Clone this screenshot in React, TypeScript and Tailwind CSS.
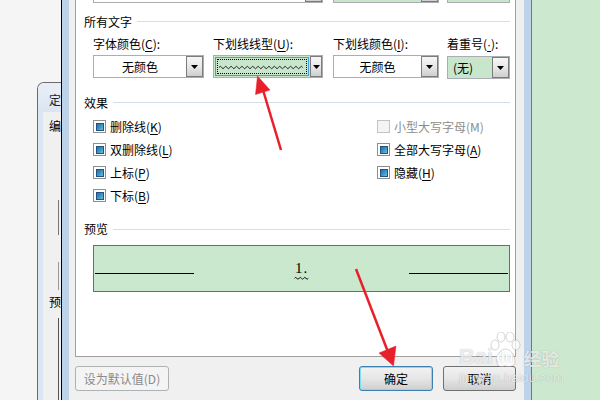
import React from "react";

function wavePath(x0: number, x1: number, y: number, half: number, amp: number) {
  let d = `M${x0} ${y} Q${x0 + half / 2} ${y - amp * 2} ${x0 + half} ${y}`;
  for (let x = x0 + 2 * half; x <= x1; x += half) d += ` T${x} ${y}`;
  return d;
}

const Tri = () => (
  <svg width="7" height="4" viewBox="0 0 7 4">
    <polygon points="0,0 7,0 3.5,4" fill="#000" />
  </svg>
);

const DropBtn = () => (
  <div className="w-[17px] h-full border border-[#7c7c7c] bg-gradient-to-b from-[#f6f6f6] via-[#e8e8e8] to-[#cfcfcf] flex items-center justify-center">
    <Tri />
  </div>
);

const K = ({ c }: { c: string }) => <span className="underline underline-offset-[2px]">{c}</span>;

const Section = ({ title, lineTop }: { title: string; lineTop: string }) => (
  <div className="flex items-start leading-[16px]">
    <span>{title}</span>
    <div className={`flex-1 h-px bg-[#d5dfe5] ml-[5px] ${lineTop}`} />
  </div>
);

const Box = ({ disabled }: { disabled?: boolean }) =>
  disabled ? (
    <span className="w-[13px] h-[13px] border border-[#c3c3c3] bg-[#f4f4f4] shrink-0" />
  ) : (
    <span className="w-[13px] h-[13px] border border-[#8e8f8f] bg-white flex items-center justify-center shrink-0">
      <span className="w-[8px] h-[8px] border border-[#23527f] bg-gradient-to-br from-[#2a6fa6] via-[#3b94c4] to-[#62c4e2]" />
    </span>
  );

const CB = ({ children, disabled }: { children: React.ReactNode; disabled?: boolean }) => (
  <div className="h-[23px] flex items-center gap-[4px] leading-[16px]">
    <Box disabled={disabled} />
    <span className={disabled ? "text-[#8d8d8d]" : ""}>{children}</span>
  </div>
);

export default function App() {
  return (
    <div className="relative w-[600px] h-[400px] overflow-hidden flex bg-[#f5f5f5] font-['Noto_Sans_CJK_SC','Noto_Sans',sans-serif] text-[12px] text-black">
      {/* back dialog on the left */}
      <div className="w-[61px] h-full flex flex-col pt-[82px] pl-[37px] bg-[#f5f5f5] shrink-0">
        <div className="flex-1 flex flex-col rounded-tl-[7px] border-l border-t border-[#6b6b6b] overflow-hidden">
          <div className="h-[29px] bg-gradient-to-b from-[#e9eff7] to-[#dbe5f1] pl-[11px] pt-[10px] leading-[14px] text-[#222]">定</div>
          <div className="flex-1 flex">
            <div className="w-[7px] bg-[#dbe6f3]" />
            <div className="flex-1 bg-[#f0f0f0] pl-[6px] flex flex-col">
              <div className="mt-[6px] leading-[16px]">编</div>
              <div className="mt-[66px] ml-[9px] h-[35px] border-l border-[#777]" />
              <div className="mt-[27px] ml-[9px] h-[28px] border-l border-[#999]" />
              <div className="mt-[4px] leading-[16px]">预</div>
              <div className="mt-[8px] ml-[9px] flex-1 border-l border-[#555]" />
            </div>
          </div>
        </div>
      </div>

      {/* main dialog */}
      <div className="h-full flex border-l border-black shrink-0">
        <div className="w-[7px] bg-[#bcd3ea]" />
        <div className="w-[455px] bg-[#f0f0f0] pl-[6px] pr-[8px] flex flex-col">
          <div className="h-[357px] w-[441px] bg-white border-x border-b border-[#a0a0a0] pl-[8px] pr-[5px] flex flex-col">
            {/* partial top row */}
            <div className="-mt-[20px] h-[23px] flex ml-[9px] shrink-0">
              <div className="w-[230px] h-full border border-[#abadb3] flex justify-end">
                <DropBtn />
              </div>
              <div className="w-[106px] h-full ml-[10px] border border-[#abadb3] flex">
                <div className="flex-1 bg-[#c7e6cb]" />
                <DropBtn />
              </div>
              <div className="w-[63px] h-full ml-[8px] border border-[#abadb3] bg-[#c7e6cb]" />
            </div>

            <div className="mt-[11px]">
              <Section title="所有文字" lineTop="mt-[7px]" />
            </div>

            <div className="mt-[6px] ml-[9px] flex">
              <div className="w-[120px] flex flex-col">
                <div className="leading-[16px] mb-[3px]">字体颜色(<K c="C" />):</div>
                <div className="w-[111px] h-[23px] border border-[#abadb3] flex">
                  <div className="flex-1 flex items-center justify-center">无颜色</div>
                  <DropBtn />
                </div>
              </div>
              <div className="w-[120px] flex flex-col">
                <div className="leading-[16px] mb-[3px]">下划线线型(<K c="U" />):</div>
                <div className="w-[110px] h-[23px] border border-[#abadb3] flex">
                  <div className="flex-1 bg-[#c7e6cb] p-px">
                    <div className="w-full h-full border border-[#3f9fe0] p-px">
                      <div className="w-full h-full border border-dotted border-black flex items-center">
                        <svg width="88" height="6" viewBox="0 0 88 6">
                          <path d={wavePath(1, 87, 3.5, 2.7, 1.2)} stroke="#222" strokeWidth="1" fill="none" />
                        </svg>
                      </div>
                    </div>
                  </div>
                  <DropBtn />
                </div>
              </div>
              <div className="w-[114px] flex flex-col">
                <div className="leading-[16px] mb-[3px]">下划线颜色(<K c="I" />):</div>
                <div className="w-[106px] h-[23px] border border-[#abadb3] flex">
                  <div className="flex-1 flex items-center justify-center">无颜色</div>
                  <DropBtn />
                </div>
              </div>
              <div className="w-[63px] flex flex-col">
                <div className="leading-[16px] mb-[3px]">
                  着重号(<span className="underline underline-offset-[2px] font-['Liberation_Sans',sans-serif]">·</span>):
                </div>
                <div className="w-[63px] h-[23px] border border-[#abadb3] flex bg-[#c7e6cb]">
                  <div className="flex-1 flex items-center pl-[5px]">(无)</div>
                  <DropBtn />
                </div>
              </div>
            </div>

            <div className="mt-[16px]">
              <Section title="效果" lineTop="mt-[7px]" />
            </div>

            <div className="mt-[4px] ml-[9px] grid grid-cols-[284px_1fr]">
              <div className="flex flex-col">
                <CB>删除线(<K c="K" />)</CB>
                <CB>双删除线(<K c="L" />)</CB>
                <CB>上标(<K c="P" />)</CB>
                <CB>下标(<K c="B" />)</CB>
              </div>
              <div className="flex flex-col">
                <CB disabled>小型大写字母(M)</CB>
                <CB>全部大写字母(<K c="A" />)</CB>
                <CB>隐藏(<K c="H" />)</CB>
              </div>
            </div>

            <div className="mt-[14px]">
              <Section title="预览" lineTop="mt-[8px]" />
            </div>

            <div className="mt-[8px] ml-[9px] h-[47px] border border-[#6d6d6d] bg-[#c9e8ce] flex">
              <div className="w-[99px] h-px bg-black ml-px mt-[27px]" />
              <div className="flex-1 flex justify-center pt-[14px]">
                <div className="flex flex-col items-center">
                  <span className="font-['Liberation_Serif',serif] text-[15px] leading-[16px] tracking-[1px]">1.</span>
                  <svg width="15" height="4" viewBox="0 0 15 4">
                    <path d={wavePath(0.5, 14.5, 2.3, 2.3, 0.9)} stroke="#111" strokeWidth="1" fill="none" />
                  </svg>
                </div>
              </div>
              <div className="w-[99px] h-px bg-black mr-px mt-[27px]" />
            </div>
          </div>

          {/* buttons */}
          <div className="mt-[9px] w-[441px] flex justify-between">
            <div className="w-[94px] h-[25px] rounded-[3px] border border-[#adb2b5] bg-[#f4f4f4] text-[#8a8a8a] flex items-center justify-center leading-[16px]">
              设为默认值(D)
            </div>
            <div className="flex gap-[10px]">
              <div className="w-[74px] h-[25px] rounded-[3px] border border-[#3c7fb1] shadow-[inset_0_0_0_1px_#7fdcfa] bg-gradient-to-b from-[#f2f2f2] via-[#e6e6e6] to-[#cfcfcf] flex items-center justify-center leading-[16px]">
                确定
              </div>
              <div className="w-[73px] h-[25px] rounded-[3px] border border-[#707070] bg-gradient-to-b from-[#f2f2f2] via-[#e6e6e6] to-[#cfcfcf] flex items-center justify-center leading-[16px]">
                取消
              </div>
            </div>
          </div>
        </div>
        <div className="w-[7px] bg-[#bcd3ea]" />
        <div className="w-px bg-[#2a8fc4]" />
      </div>

      <div className="flex-1 bg-[#cce8cf]" />

      {/* Baidu watermark */}
      <div className="absolute left-[459px] top-[332px] pointer-events-none text-white/75 [text-shadow:0_0_1px_rgba(0,0,0,0.3)]">
        <div className="flex items-end h-[36px]">
          <span className="font-['Liberation_Sans',sans-serif] font-bold text-[22px] leading-[22px]">Bai</span>
          <div className="relative w-[28px] h-[36px] -ml-[4px]">
            <svg className="absolute left-0 top-0" width="32" height="36" viewBox="0 0 32 36">
              <g fill="rgba(255,255,255,0.7)" stroke="rgba(120,120,120,0.3)" strokeWidth="1">
                <ellipse cx="6" cy="13" rx="4" ry="5" />
                <ellipse cx="12" cy="5" rx="4" ry="5" />
                <ellipse cx="21" cy="5" rx="4" ry="5" />
                <ellipse cx="27" cy="13" rx="4" ry="5" />
                <path d="M8 30 C8 22 12 17 16 17 C21 17 26 22 26 30 C26 35 20 35 16 34 C12 35 8 35 8 30 Z" />
              </g>
            </svg>
            <span className="absolute left-[7px] top-[17px] font-['Liberation_Sans',sans-serif] font-bold text-[14px] leading-[16px] text-white">du</span>
          </div>
          <span className="ml-[6px] font-bold text-[18px] leading-[20px]">经验</span>
        </div>
        <div className="mt-[2px] font-['Liberation_Sans',sans-serif] text-[13px] leading-[15px]">jingyan.baidu.com</div>
      </div>

      {/* red arrows */}
      <svg className="absolute left-0 top-0 pointer-events-none" width="600" height="400" viewBox="0 0 600 400">
        <g stroke="#e8202b" strokeWidth="2.5" fill="#e8202b">
          <line x1="281" y1="150" x2="263" y2="90" />
          <polygon points="257.5,76 270,90 255.5,94.5" strokeWidth="0.5" />
          <line x1="356" y1="269" x2="388" y2="352" />
          <polygon points="393.5,366 396,346 379,353" strokeWidth="0.5" />
        </g>
      </svg>
    </div>
  );
}
